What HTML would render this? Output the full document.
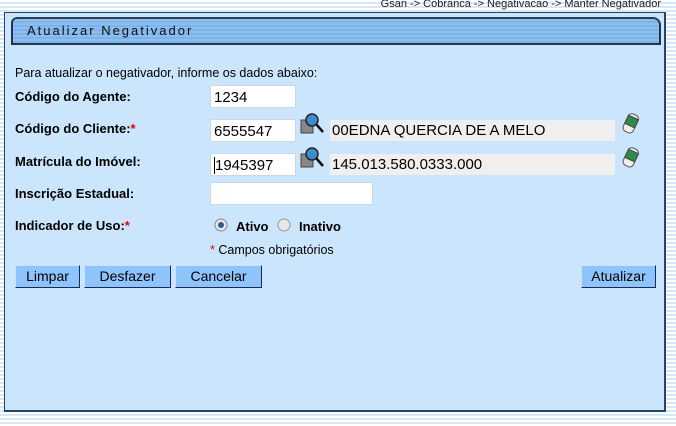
<!DOCTYPE html>
<html><head><meta charset="utf-8"><style>
*{margin:0;padding:0;box-sizing:border-box}
body{width:676px;height:426px;overflow:hidden;position:relative;font-family:"Liberation Sans",Arial,sans-serif;font-size:13px;color:#000;
background:repeating-linear-gradient(to bottom,#fff 0,#fff 2px,#d6e7f7 2px,#d6e7f7 4px)}
.a{position:absolute;white-space:nowrap}
#bc{right:15px;top:-2px;font-size:11px;color:#222}
#panel{left:4px;top:12px;width:662px;height:400px;background:#cbe5fd;border:1px solid #2a4560;border-right-width:2px;border-bottom-width:2px}
#hd{left:11px;top:17px;width:650px;height:28px;background:repeating-linear-gradient(to bottom,#8dbef0 0,#8dbef0 2px,#7fb2e8 2px,#7fb2e8 4px);border:2px solid #1f3550;border-radius:6px 8px 0 0;border-top-color:#2a3f58}
#hd span{position:absolute;left:14px;top:4px;font-size:13px;letter-spacing:2px;color:#111}
.l{font-weight:bold;font-size:13px}
.r{color:#e00}
.in{position:absolute;background:#fff;border:1px solid #c8d8e8;height:23px;font-size:15px;padding:3px 0 0 3px}
.ro{position:absolute;background:#efefef;height:21px;font-size:15px;padding:2px 0 0 2px}
.b{position:absolute;top:265px;height:23px;background:#8fc3fb;border:1px solid #1b2b55;border-top-color:#c9e2ff;border-left-color:#c9e2ff;font-size:14px;text-align:center;line-height:21px}
</style></head><body>
<div class="a" id="bc">Gsan -&gt; Cobranca -&gt; Negativacao -&gt; Manter Negativador</div>
<div class="a" id="panel"></div>
<div class="a" id="hd"><span>Atualizar Negativador</span></div>
<div class="a" style="left:15px;top:66px;font-size:12.5px">Para atualizar o negativador, informe os dados abaixo:</div>
<div class="a l" style="left:15px;top:89px">Código do Agente:</div>
<div class="a l" style="left:15px;top:121px">Código do Cliente:<span class="r">*</span></div>
<div class="a l" style="left:15px;top:154px">Matrícula do Imóvel:</div>
<div class="a l" style="left:15px;top:186px">Inscrição Estadual:</div>
<div class="a l" style="left:15px;top:218px">Indicador de Uso:<span class="r">*</span></div>
<div class="in" style="left:210px;top:85px;width:86px">1234</div>
<div class="in" style="left:210px;top:119px;width:86px">6555547</div>
<div class="in" style="left:210px;top:153px;width:86px"><span style="border-left:1px solid #000">1945397</span></div>
<div class="in" style="left:210px;top:182px;width:163px"></div>
<svg class="a" style="left:300px;top:113px" width="26" height="26" viewBox="0 0 26 26"><rect x="1" y="7" width="12" height="13" fill="#888" stroke="#444"/><circle cx="12" cy="7" r="6" fill="#3a8fc8" stroke="#223" stroke-width="1.5"/><line x1="16" y1="11" x2="23" y2="19" stroke="#111" stroke-width="2.5"/></svg>
<svg class="a" style="left:300px;top:147px" width="26" height="26" viewBox="0 0 26 26"><rect x="1" y="7" width="12" height="13" fill="#888" stroke="#444"/><circle cx="12" cy="7" r="6" fill="#3a8fc8" stroke="#223" stroke-width="1.5"/><line x1="16" y1="11" x2="23" y2="19" stroke="#111" stroke-width="2.5"/></svg>
<div class="ro" style="left:330px;top:120px;width:285px">00EDNA QUERCIA DE A MELO</div>
<div class="ro" style="left:330px;top:154px;width:285px">145.013.580.0333.000</div>
<svg class="a" style="left:620px;top:113px" width="22" height="22" viewBox="0 0 22 22"><g transform="rotate(25 11 11)"><rect x="5" y="1" width="11" height="19" rx="4" fill="#eee" stroke="#555"/><rect x="5" y="4" width="11" height="9" fill="#2f8a4a" stroke="#444"/></g></svg>
<svg class="a" style="left:620px;top:147px" width="22" height="22" viewBox="0 0 22 22"><g transform="rotate(25 11 11)"><rect x="5" y="1" width="11" height="19" rx="4" fill="#eee" stroke="#555"/><rect x="5" y="4" width="11" height="9" fill="#2f8a4a" stroke="#444"/></g></svg>
<svg class="a" style="left:214px;top:218px" width="14" height="14"><circle cx="7" cy="7" r="6" fill="#e8e8e8" stroke="#888"/><circle cx="7" cy="7" r="3" fill="#2a5c88"/></svg>
<div class="a l" style="left:236px;top:219px">Ativo</div>
<svg class="a" style="left:277px;top:218px" width="14" height="14"><circle cx="7" cy="7" r="6" fill="#e8e8e8" stroke="#999"/></svg>
<div class="a l" style="left:299px;top:219px">Inativo</div>
<div class="a" style="left:210px;top:243px;font-size:12.5px"><span class="r">*</span> Campos obrigatórios</div>
<div class="b" style="left:15px;width:65px">Limpar</div>
<div class="b" style="left:84px;width:87px">Desfazer</div>
<div class="b" style="left:175px;width:87px">Cancelar</div>
<div class="b" style="left:581px;width:75px">Atualizar</div>
</body></html>
